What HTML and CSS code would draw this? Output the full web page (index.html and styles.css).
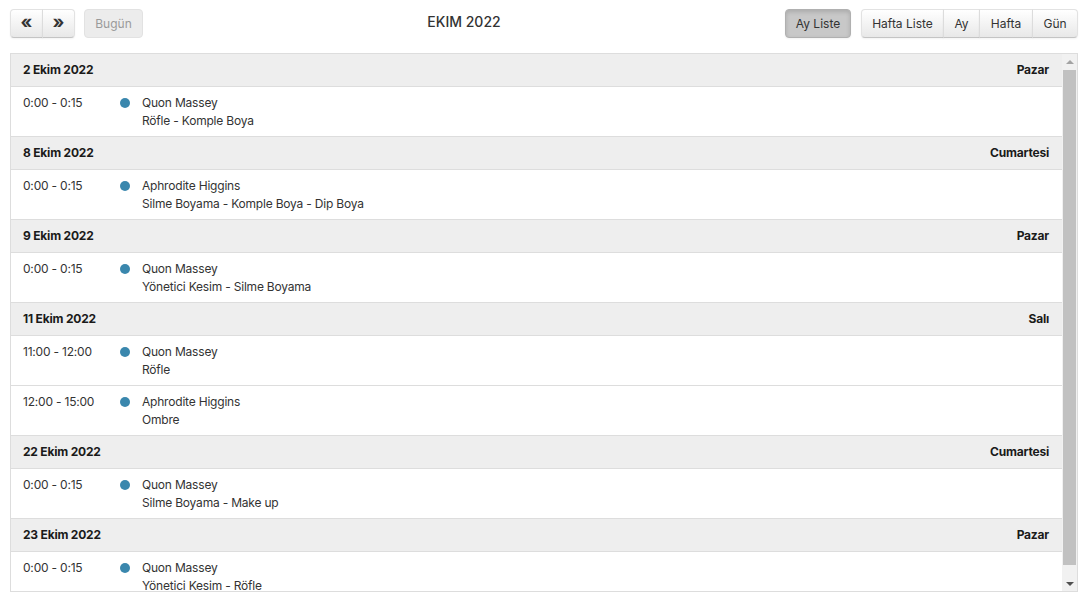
FILE: index.html
```html
<!DOCTYPE html>
<html lang="tr">
<head>
<meta charset="utf-8">
<title>Takvim</title>
<link rel="stylesheet" href="styles.css">
</head>
<body>
<div class="page">
  <div class="toolbar">
    <div class="tb-left">
      <div class="btn-group">
        <button class="btn btn-icon"><span class="arrow">«</span></button>
        <button class="btn btn-icon"><span class="arrow">»</span></button>
      </div>
      <button class="btn btn-disabled btn-today">Bugün</button>
    </div>
    <div class="tb-center"><h2 class="title">EKIM 2022</h2></div>
    <div class="tb-right">
      <button class="btn btn-active btn-aylist">Ay Liste</button>
      <div class="btn-group">
        <button class="btn btn-hl">Hafta Liste</button>
        <button class="btn btn-ay">Ay</button>
        <button class="btn btn-hafta">Hafta</button>
        <button class="btn btn-gun">Gün</button>
      </div>
    </div>
  </div>

  <div class="list">
    <div class="list-body">
      <div class="day"><span class="day-date">2 Ekim 2022</span><span class="day-name">Pazar</span></div>
      <div class="item"><span class="time">0:00 - 0:15</span><span class="dot"></span><div class="info"><div>Quon Massey</div><div>Röfle - Komple Boya</div></div></div>

      <div class="day"><span class="day-date">8 Ekim 2022</span><span class="day-name">Cumartesi</span></div>
      <div class="item"><span class="time">0:00 - 0:15</span><span class="dot"></span><div class="info"><div>Aphrodite Higgins</div><div>Silme Boyama - Komple Boya - Dip Boya</div></div></div>

      <div class="day"><span class="day-date">9 Ekim 2022</span><span class="day-name">Pazar</span></div>
      <div class="item"><span class="time">0:00 - 0:15</span><span class="dot"></span><div class="info"><div>Quon Massey</div><div>Yönetici Kesim - Silme Boyama</div></div></div>

      <div class="day"><span class="day-date">11 Ekim 2022</span><span class="day-name">Salı</span></div>
      <div class="item"><span class="time">11:00 - 12:00</span><span class="dot"></span><div class="info"><div>Quon Massey</div><div>Röfle</div></div></div>
      <div class="item"><span class="time">12:00 - 15:00</span><span class="dot"></span><div class="info"><div>Aphrodite Higgins</div><div>Ombre</div></div></div>

      <div class="day"><span class="day-date">22 Ekim 2022</span><span class="day-name">Cumartesi</span></div>
      <div class="item"><span class="time">0:00 - 0:15</span><span class="dot"></span><div class="info"><div>Quon Massey</div><div>Silme Boyama - Make up</div></div></div>

      <div class="day"><span class="day-date">23 Ekim 2022</span><span class="day-name">Pazar</span></div>
      <div class="item"><span class="time">0:00 - 0:15</span><span class="dot"></span><div class="info"><div>Quon Massey</div><div>Yönetici Kesim - Röfle</div></div></div>
    </div>
    <div class="scrollbar">
      <div class="sb-btn"><span class="tri tri-up"></span></div>
      <div class="sb-track"><div class="sb-thumb"></div></div>
      <div class="sb-btn"><span class="tri tri-down"></span></div>
    </div>
  </div>
</div>
</body>
</html>
```

FILE: styles.css
```css
* { box-sizing: border-box; }
html, body { margin: 0; padding: 0; background: #fff; }
body {
  font-family: Inter, "Noto Sans", "DejaVu Sans", sans-serif;
  font-size: 12px;
  letter-spacing: -0.2px;
  color: #333;
}
.page {
  padding: 9px 9px 0 10px;
}
.toolbar {
  display: flex;
  align-items: flex-start;
  height: 29px;
  margin-bottom: 15px;
}
.tb-left, .tb-right { display: flex; gap: 9px; }
.tb-right { gap: 10px; }
.tb-center { flex: 1; text-align: center; }
.title {
  margin: 0;
  font-size: 14px;
  font-weight: 500;
  letter-spacing: 0;
  line-height: 25px;
  color: #333;
}
.btn-group { display: flex; }
.btn {
  height: 29px;
  padding: 0;
  font-family: Inter, "Noto Sans", sans-serif;
  font-size: 12px;
  letter-spacing: 0;
  color: #333;
  background: linear-gradient(#ffffff, #e8e8e8);
  border: 1px solid #e2e2e2;
  border-bottom-color: #c4c4c4;
  border-radius: 4px;
  box-shadow: inset 0 1px 0 rgba(255,255,255,0.2), 0 1px 2px rgba(0,0,0,0.05);
  text-align: center;
}
.btn-group .btn { border-radius: 0; }
.btn-group .btn + .btn { border-left-color: #dcdcdc; margin-left: -1px; }
.btn-group .btn:first-child { border-radius: 4px 0 0 4px; }
.btn-group .btn:last-child { border-radius: 0 4px 4px 0; }
.btn-icon { width: 33px; }
.arrow { font-size: 18px; font-weight: 700; line-height: 1; position: relative; top: -2px; }
.btn-today { width: 59px; }
.btn-disabled {
  background: #ececec;
  color: #9a9a9a;
  border-color: #e2e2e2;
  box-shadow: none;
}
.btn-active {
  background: #c8c8c8;
  border-color: #b0b0b0;
  box-shadow: inset 0 2px 4px rgba(0,0,0,0.15), 0 1px 2px rgba(0,0,0,0.05);
  color: #333;
}
.btn-aylist { width: 66px; }
.btn-hl { width: 83px; }
.btn-ay { width: 37px; }
.btn-hafta { width: 54px; }
.btn-gun { width: 46px; }

.list {
  display: flex;
  border: 1px solid #ddd;
  height: 539px;
  overflow: hidden;
}
.list-body { flex: 1; overflow: hidden; }
.day {
  display: flex;
  justify-content: space-between;
  align-items: center;
  height: 33px;
  padding: 0 13px 2px 12px;
  background: #eee;
  border-bottom: 1px solid #ddd;
  font-weight: 700;
  color: #1a1a1a;
}
.item {
  display: flex;
  align-items: flex-start;
  height: 50px;
  padding: 7px 12px 6px;
  border-bottom: 1px solid #ddd;
  line-height: 17.5px;
}
.time { width: 97px; flex: none; }
.dot {
  width: 10px; height: 10px;
  border-radius: 50%;
  background: #3a87ad;
  margin-top: 4px;
  margin-right: 12px;
  flex: none;
}
.info div { white-space: nowrap; }

.scrollbar {
  width: 15px;
  flex: none;
  display: flex;
  flex-direction: column;
  background: #f1f1f1;
}
.sb-btn {
  height: 15px;
  display: flex;
  align-items: center;
  justify-content: center;
}
.tri { width: 0; height: 0; border-left: 4px solid transparent; border-right: 4px solid transparent; }
.tri-up { border-bottom: 4px solid #a3a3a3; }
.tri-down { border-top: 4px solid #505050; }
.sb-track { flex: 1; padding: 1px 0; }
.sb-thumb { height: 495px; background: #c1c1c1; margin: 0 1px; }
```
